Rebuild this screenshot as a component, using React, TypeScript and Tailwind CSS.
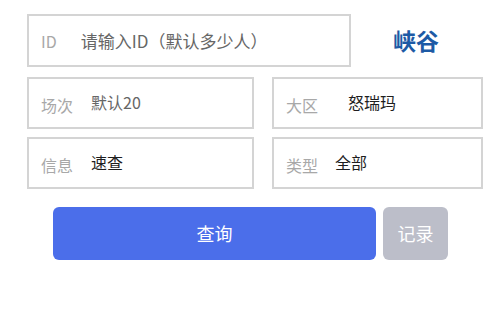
import React from "react";

const font = { fontFamily: '"Noto Sans CJK SC", "Noto Sans", sans-serif' };

function Field({ label, value, dark, w, valueClass }: { label: string; value: string; dark?: boolean; w: string; valueClass?: string }) {
  return (
    <div className={`${w} h-[52px] border-2 border-[#d4d4d4] flex items-center bg-white`}>
      <span className="ml-[12px] mt-[4px] text-[16px] leading-none text-[#a8a8a8] w-[40px]">{label}</span>
      <span className={`${valueClass ?? "ml-[10px]"} mb-[2px] text-[16px] leading-none ${dark ? "text-[#1e1e1e]" : "text-[#666666]"}`}>{value}</span>
    </div>
  );
}

export default function App() {
  return (
    <div className="w-[500px] h-[312px] bg-white pl-[27px] pt-[14px]" style={font}>
      <div className="flex items-center">
        <div className="w-[324px] h-[53px] border-2 border-[#d4d4d4] flex items-center">
          <span className="ml-[12px] text-[16px] leading-none text-[#a8a8a8]">ID</span>
          <span className="ml-[24px] text-[17px] leading-none text-[#666666]">请输入ID（默认多少人）</span>
        </div>
        <div className="w-[130px] flex justify-center">
          <span className="text-[23px] font-bold leading-none text-[#1d5aa5]">峡谷</span>
        </div>
      </div>
      <div className="flex gap-[18px] mt-[10px]">
        <Field w="w-[227px]" label="场次" value="默认20" valueClass="ml-[10px]" />
        <Field w="w-[211px]" label="大区" value="怒瑞玛" dark valueClass="ml-[22px]" />
      </div>
      <div className="flex gap-[18px] mt-[8px]">
        <Field w="w-[227px]" label="信息" value="速查" dark valueClass="ml-[10px]" />
        <Field w="w-[211px]" label="类型" value="全部" dark valueClass="ml-[9px]" />
      </div>
      <div className="flex gap-[7px] mt-[18px] ml-[26px]">
        <div className="w-[323px] h-[53px] rounded-[6px] bg-[#4b6eea] flex items-center justify-center text-white text-[18px]">查询</div>
        <div className="w-[65px] h-[53px] rounded-[6px] bg-[#bcbec9] flex items-center justify-center text-white text-[18px]">记录</div>
      </div>
    </div>
  );
}
